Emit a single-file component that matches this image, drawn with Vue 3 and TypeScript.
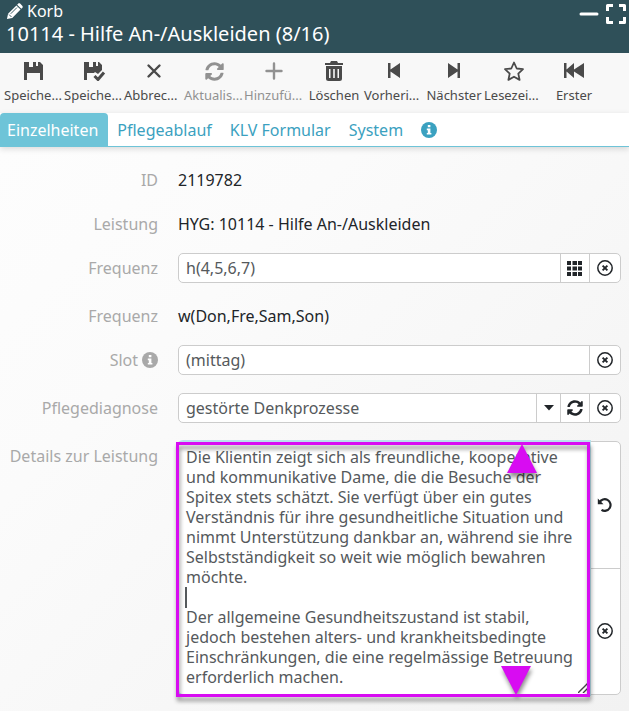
<script setup lang="ts">
import { ref } from 'vue'

interface Action {
  label: string
  icon: string
  cut?: boolean
  disabled?: boolean
}

const actions: Action[] = [
  { label: 'Speiche...', icon: 'save', cut: true },
  { label: 'Speiche...', icon: 'saveCheck', cut: true },
  { label: 'Abbrec...', icon: 'cross', cut: true },
  { label: 'Aktualis...', icon: 'refresh', cut: true, disabled: true },
  { label: 'Hinzufü...', icon: 'plus', cut: true, disabled: true },
  { label: 'Löschen', icon: 'trash' },
  { label: 'Vorheri...', icon: 'prev', cut: true },
  { label: 'Nächster', icon: 'next' },
  { label: 'Lesezei...', icon: 'star', cut: true },
  { label: 'Erster', icon: 'first' },
]

const tabs = ['Einzelheiten', 'Pflegeablauf', 'KLV Formular', 'System']
const activeTab = ref('Einzelheiten')

const frequency = ref('h(4,5,6,7)')
const slot = ref('(mittag)')
const diagnosis = ref('gestörte Denkprozesse')
const details = ref(
  'Die Klientin zeigt sich als freundliche, kooperative und kommunikative Dame, die die Besuche der Spitex stets schätzt. Sie verfügt über ein gutes Verständnis für ihre gesundheitliche Situation und nimmt Unterstützung dankbar an, während sie ihre Selbstständigkeit so weit wie möglich bewahren möchte.\n\n' +
    'Der allgemeine Gesundheitszustand ist stabil, jedoch bestehen alters- und krankheitsbedingte Einschränkungen, die eine regelmässige Betreuung erforderlich machen.',
)
</script>

<template>
  <svg class="sprite" aria-hidden="true">
    <symbol id="clear" viewBox="0 0 18 18">
      <circle cx="9" cy="9" r="7.2" fill="none" stroke="currentColor" stroke-width="1.5" />
      <path d="M6.6 6.6l4.8 4.8M11.4 6.6l-4.8 4.8" stroke="currentColor" stroke-width="1.9" />
    </symbol>
    <symbol id="refresh" viewBox="0 0 512 512">
      <path fill="currentColor" d="M370.72 133.28C339.458 104.008 298.888 87.962 255.848 88c-77.458.068-144.328 53.178-162.791 126.85-1.344 5.363-6.122 9.15-11.651 9.15H24.103c-7.498 0-13.194-6.807-11.807-14.176C33.933 94.924 134.813 8 256 8c66.448 0 126.791 26.136 171.315 68.685L463.03 40.97C478.149 25.851 504 36.559 504 57.941V192c0 13.255-10.745 24-24 24H345.941c-21.382 0-32.09-25.851-16.971-40.971l41.75-41.749zM32 296h134.059c21.382 0 32.09 25.851 16.971 40.971l-41.75 41.75c31.262 29.273 71.835 45.319 114.876 45.28 77.418-.07 144.315-53.144 162.787-126.849 1.344-5.363 6.122-9.15 11.651-9.15h57.304c7.498 0 13.194 6.807 11.807 14.176C478.067 417.076 377.187 504 256 504c-66.448 0-126.791-26.136-171.315-68.685L48.97 471.03C33.851 486.149 8 475.441 8 454.059V320c0-13.255 10.745-24 24-24z" />
    </symbol>
    <symbol id="info" viewBox="0 0 16 16">
      <circle cx="8" cy="8" r="8" fill="currentColor" />
      <path fill="#fff" d="M6.8 3h2.6v2.2H6.8zM5.8 6.6h3.6v4.4h1v1.6H5.8V11h1V8.2h-1z" />
    </symbol>
  </svg>

  <main class="page">
    <header class="head">
      <div class="titles">
        <p class="crumb">
          <svg class="pencil" viewBox="0 0 18 18">
            <path fill="#fff" d="M1 17l1.2-5.6L11 2.6l4.4 4.4-8.8 8.8zM11.8 1.8l1-1c.7-.7 1.7-.7 2.4 0l2 2c.7.7.7 1.7 0 2.4l-1 1z" />
            <path d="M3.2 12.2l2.6 2.6M5 11.4L11.6 4.8" stroke="#2f5059" stroke-width="1" />
          </svg>
          <span>Korb</span>
        </p>
        <h1>10114 - Hilfe An-/Auskleiden (8/16)</h1>
      </div>
      <div class="window-buttons">
        <button type="button" aria-label="Minimieren">
          <svg viewBox="0 0 20 20"><path d="M2 10H18" stroke="#fff" stroke-width="3" stroke-linecap="round" /></svg>
        </button>
        <button type="button" aria-label="Vollbild">
          <svg viewBox="0 0 20 20"><path d="M1.500 7V1.500H7M13 1.500h5.500V7M18.500 13v5.500H13M7 18.500H1.500V13" fill="none" stroke="#fff" stroke-width="3" stroke-linejoin="round" /></svg>
        </button>
      </div>
    </header>

    <nav class="toolbar">
      <button v-for="(a, i) in actions" :key="i" type="button" class="action" :class="{ cut: a.cut }" :disabled="a.disabled">
        <svg class="action-icon" viewBox="0 0 24 20" fill="currentColor">
          <path v-if="a.icon === 'save'" d="M2 1h5v5h4V1h3v4h2V1h2L21 4v15h-3v-7H5v7H2z" />
          <template v-else-if="a.icon === 'saveCheck'">
            <path d="M2 1h5v5h4V1h3v4h2V1h1L20 4v5l-4 4-3-2-1 1H5v7H2z" />
            <path d="M12.500 15l3.500 3.500 6-7" fill="none" stroke="currentColor" stroke-width="3" />
          </template>
          <path v-else-if="a.icon === 'cross'" d="M6.500 4.500l11 11M17.500 4.500l-11 11" stroke="currentColor" stroke-width="2.400" stroke-linecap="round" />
          <use v-else-if="a.icon === 'refresh'" href="#refresh" x="3" y="1" width="19" height="19" />
          <path v-else-if="a.icon === 'plus'" d="M12 2.500v15M4.500 10h15" stroke="currentColor" stroke-width="2.400" stroke-linecap="round" />
          <path v-else-if="a.icon === 'trash'" fill-rule="evenodd" d="M3 2h5l1-2h6l1 2h5v2H3zM4 5h16v12.500a2.500 2.500 0 0 1-2.500 2.500h-11A2.500 2.500 0 0 1 4 17.500zM7 8v9h1.500V8zM11.200 8v9h1.600V8zM15.500 8v9H17V8z" />
          <path v-else-if="a.icon === 'prev'" d="M6 2h2.500v6.500L18 2v15l-9.500-6.500V17H6z" />
          <path v-else-if="a.icon === 'next'" d="M18 2h-2.500v6.500L6 2v15l9.500-6.500V17H18z" />
          <path v-else-if="a.icon === 'star'" d="M12 1.500l2.700 6 6.300.7-4.700 4.400 1.300 6.300-5.600-3.200-5.600 3.200 1.300-6.300L3 8.200l6.300-.7z" fill="none" stroke="currentColor" stroke-width="1.800" stroke-linejoin="round" />
          <path v-else d="M2 2h2.500v6.500L12 2v6.500L22 2v15l-10-6.500V17l-7.500-6.500V17H2z" />
        </svg>
        <span class="action-label">{{ a.label }}</span>
      </button>
    </nav>

    <nav class="tabs">
      <button v-for="t in tabs" :key="t" type="button" class="tab" :class="{ active: t === activeTab }" @click="activeTab = t">{{ t }}</button>
      <button type="button" class="tab" aria-label="Information"><svg class="info"><use href="#info" /></svg></button>
    </nav>

    <form class="form" @submit.prevent>
      <div class="row">
        <span class="label">ID</span>
        <span class="value">2119782</span>
      </div>
      <div class="row">
        <span class="label">Leistung</span>
        <span class="value">HYG: 10114 - Hilfe An-/Auskleiden</span>
      </div>
      <div class="row field">
        <label class="label" for="frequency">Frequenz</label>
        <div class="group">
          <input id="frequency" v-model="frequency" type="text" />
          <button type="button" class="mid" aria-label="Auswahl">
            <svg class="grid-icon" viewBox="0 0 16 16" fill="currentColor"><path d="M0 1h4v4H0zM5.500 1h4.500v4H5.500zM11 1h4v4h-4zM0 6.500h4v4H0zM5.500 6.500h4.500v4H5.500zM11 6.500h4v4h-4zM0 12h4v4H0zM5.500 12h4.500v4H5.500zM11 12h4v4h-4z" /></svg>
          </button>
          <button type="button" class="end" aria-label="Leeren"><svg class="glyph"><use href="#clear" /></svg></button>
        </div>
      </div>
      <div class="row">
        <span class="label">Frequenz</span>
        <span class="value">w(Don,Fre,Sam,Son)</span>
      </div>
      <div class="row field">
        <label class="label" for="slot">Slot <svg class="info"><use href="#info" /></svg></label>
        <div class="group">
          <input id="slot" v-model="slot" type="text" />
          <button type="button" class="end" aria-label="Leeren"><svg class="glyph"><use href="#clear" /></svg></button>
        </div>
      </div>
      <div class="row field">
        <label class="label" for="diagnosis">Pflegediagnose</label>
        <div class="group">
          <input id="diagnosis" v-model="diagnosis" type="text" />
          <button type="button" class="narrow" aria-label="Liste öffnen">
            <svg class="caret-icon" viewBox="0 0 10 6"><path d="M0 0h10L5 5.500z" fill="currentColor" /></svg>
          </button>
          <button type="button" class="mid" aria-label="Aktualisieren"><svg class="small-glyph"><use href="#refresh" /></svg></button>
          <button type="button" class="end" aria-label="Leeren"><svg class="glyph"><use href="#clear" /></svg></button>
        </div>
      </div>
      <div class="row details">
        <label class="label" for="details">Details zur Leistung</label>
        <div class="group tall">
          <div class="editor">
            <textarea id="details" v-model="details" rows="12" spellcheck="false"></textarea>
            <span class="text-cursor"></span>
            <svg class="grip" viewBox="0 0 10 10"><path d="M0 10L10 0M5 10l5-5" stroke="#444" stroke-width="1.400" /></svg>
            <div class="marker">
              <svg class="arrow up" viewBox="0 0 30 29"><path d="M15 0l15 29H0z" /></svg>
              <svg class="arrow down" viewBox="0 0 30 29"><path d="M0 0h30L15 29z" /></svg>
            </div>
          </div>
          <div class="side">
            <button type="button" aria-label="Rückgängig">
              <svg class="small-glyph" viewBox="0 0 16 16"><path d="M2.500 5.500A5.800 5.800 0 1 1 4.500 12.800" fill="none" stroke="currentColor" stroke-width="2.200" /><path d="M.8 1.500v5.700h5.700z" fill="currentColor" /></svg>
            </button>
            <button type="button" aria-label="Leeren"><svg class="glyph"><use href="#clear" /></svg></button>
          </div>
        </div>
      </div>
    </form>
  </main>
</template>

<style>
body {
  background: #f4f4f4;
}
</style>

<style scoped>
* {
  box-sizing: border-box;
}
.sprite {
  position: absolute;
  width: 0;
  height: 0;
}
.page {
  min-height: 100vh;
  display: flex;
  flex-direction: column;
  font: 16px/24px "Noto Sans", "Open Sans", sans-serif;
  color: #212529;
}
button {
  border: 0;
  padding: 0;
  background: none;
  font: inherit;
  color: inherit;
}
svg {
  display: block;
  flex: none;
}
.head {
  display: flex;
  justify-content: space-between;
  height: 53px;
  padding: 0 3px 0 6px;
  background: #2f5059;
  color: #fff;
}
.crumb {
  display: flex;
  align-items: center;
  gap: 4px;
  margin: 0;
  height: 22px;
}
.pencil {
  width: 17px;
  height: 17px;
}
h1 {
  margin: 0;
  font-size: 20px;
  font-weight: 400;
  line-height: 24px;
}
.window-buttons {
  display: flex;
  gap: 7px;
  padding-top: 3px;
  height: 24px;
}
.window-buttons svg {
  width: 20px;
  height: 20px;
}
.toolbar {
  display: flex;
  height: 60px;
  padding: 0 4px;
  background: #f8f8f8;
  color: #4a4a4a;
}
.action {
  display: flex;
  flex-direction: column;
  align-items: center;
  width: 60px;
  padding-top: 8px;
}
.action:disabled {
  color: #919191;
}
.action-icon {
  width: 24px;
  height: 20px;
}
.action-label {
  margin-top: 4px;
  font-size: 13px;
  line-height: 20px;
  white-space: nowrap;
}
.cut .action-label {
  align-self: flex-start;
}
.tabs {
  position: relative;
  display: flex;
  height: 34px;
  background: #fff;
  border-bottom: 1px solid #6ec4d8;
  box-shadow: 0 2px 6px #00000024;
}
.tab {
  padding: 0 9px;
  color: #3ba1c0;
}
.tab.active {
  padding: 0 10px 0 7px;
  background: #6ec4d8;
  color: #fff;
  border-radius: 4px 4px 0 0;
}
.info {
  width: 16px;
  height: 16px;
}
.form {
  flex: 1;
  padding: 18px 8px 14px 0;
  background: linear-gradient(135deg, #fdfdfd, #fbfbfb 30%, #f2f2f2);
}
.row {
  display: grid;
  grid-template-columns: 158px minmax(0, 1fr);
  column-gap: 20px;
  line-height: 30px;
  margin-bottom: 14px;
}
.row.field {
  margin-bottom: 18px;
}
.row.details {
  margin-bottom: 0;
}
.label {
  display: flex;
  align-items: center;
  justify-content: flex-end;
  gap: 4px;
  height: 30px;
  color: #a9a9a9;
}
.group {
  display: flex;
  height: 30px;
  background: #fff;
  border: 1px solid #ccc;
  border-radius: 5px;
}
.group button {
  display: flex;
  align-items: center;
  justify-content: center;
  border-left: 1px solid #ccc;
}
.group .narrow {
  width: 24px;
}
.group .mid {
  width: 29px;
}
.group .end {
  width: 31px;
}
input {
  flex: 1;
  min-width: 0;
  border: 0;
  padding: 0 7px;
  background: none;
  font: inherit;
  color: #55595c;
  outline: 0;
}
.grid-icon {
  width: 16px;
  height: 16px;
}
.caret-icon {
  width: 10px;
  height: 6px;
}
.glyph {
  width: 18px;
  height: 18px;
}
.small-glyph {
  width: 16px;
  height: 16px;
}
.group.tall {
  height: auto;
}
.editor {
  position: relative;
  flex: 1;
  min-width: 0;
}
textarea {
  display: block;
  width: 100%;
  height: 252px;
  padding: 5px 12px 3px 7px;
  border: 0;
  outline: 0;
  resize: none;
  overflow: hidden;
  background: #fff;
  font: inherit;
  line-height: 20px;
  color: #55595c;
  border-radius: 4px 0 0 4px;
  box-shadow: 0 0 0 2px #b9e2ec;
}
.text-cursor {
  position: absolute;
  left: 6px;
  top: 145px;
  width: 2px;
  height: 21px;
  background: #55595c;
}
.grip {
  position: absolute;
  right: 1px;
  bottom: 1px;
  width: 10px;
  height: 10px;
}
.marker {
  position: absolute;
  inset: 0 -1px -3px -3px;
  border: 3px solid #d80cf2;
  filter: drop-shadow(1px 4px 2px #00000070);
  pointer-events: none;
}
.arrow {
  position: absolute;
  width: 30px;
  height: 29px;
  fill: #d80cf2;
}
.arrow.up {
  top: -1px;
  right: 50px;
}
.arrow.down {
  bottom: -1px;
  right: 56px;
}
.side {
  display: flex;
  flex-direction: column;
  width: 31px;
}
.side button {
  flex: 1;
}
.side button + button {
  border-top: 1px solid #ccc;
}
</style>
